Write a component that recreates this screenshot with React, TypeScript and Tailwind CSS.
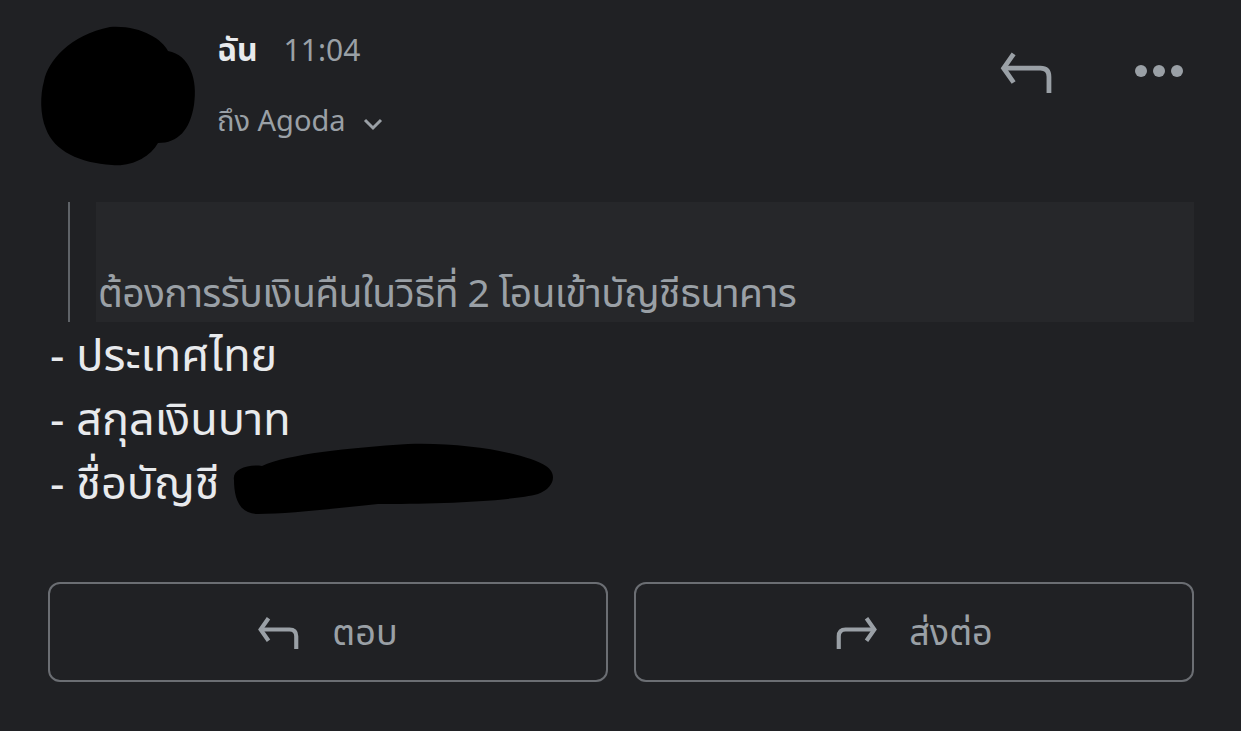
import React from "react";

function ReplyIcon({ className, sw = 5 }: { className?: string; sw?: number }) {
  return (
    <svg viewBox="0 0 56 44" className={className} fill="none" stroke="currentColor" strokeWidth={sw} strokeLinecap="butt" strokeLinejoin="miter">
      <path d="M14 3 L3.5 18 L14 33" />
      <path d="M3 18 H42 Q51 18 51 27 V44" />
    </svg>
  );
}

function ForwardIcon({ className, sw = 5 }: { className?: string; sw?: number }) {
  return (
    <svg viewBox="0 0 56 44" className={className} fill="none" stroke="currentColor" strokeWidth={sw}>
      <path d="M42 3 L52.5 18 L42 33" />
      <path d="M53 18 H14 Q5 18 5 27 V44" />
    </svg>
  );
}

export default function App() {
  const font = { fontFamily: '"Noto Sans", "Noto Sans Thai", "DejaVu Sans", sans-serif' };
  return (
    <div className="w-[1241px] h-[731px] bg-[#202124] overflow-hidden" style={font}>
      <div className="flex pl-[40px] pr-[58px] pt-[25px]">
        <svg width="160" height="142" viewBox="0 0 160 142" className="shrink-0">
          <path
            d="M70 2 C100 0 122 14 128 26 C150 30 158 55 154 80 C150 105 138 118 118 118 C110 132 92 142 72 140 C40 138 14 126 6 104 C0 90 0 70 4 56 C8 36 30 10 70 2 Z"
            fill="#000"
          />
        </svg>
        <div className="flex flex-col ml-[17px] pt-[2px]">
          <div className="flex items-baseline gap-[26px]">
            <span className="text-[32px] font-bold text-[#e8eaed] leading-[44px]">ฉัน</span>
            <span className="text-[30px] text-[#9aa0a6] leading-[44px]">11:04</span>
          </div>
          <div className="flex items-center mt-[26px]">
            <span className="text-[29px] text-[#9aa0a6] leading-[44px]">ถึง Agoda</span>
            <svg width="20" height="14" viewBox="0 0 20 14" className="ml-[17px] mt-[8px]" fill="none" stroke="#9aa0a6" strokeWidth="3">
              <path d="M2 3 L10 11 L18 3" />
            </svg>
          </div>
        </div>
        <div className="flex-1" />
        <div className="flex items-start pt-[26px] gap-[80px]">
          <ReplyIcon className="w-[56px] h-[42px] text-[#9aa0a6]" />
          <div className="flex gap-[6px] mt-[14px]">
            <span className="w-[12px] h-[12px] rounded-full bg-[#9aa0a6]" />
            <span className="w-[12px] h-[12px] rounded-full bg-[#9aa0a6]" />
            <span className="w-[12px] h-[12px] rounded-full bg-[#9aa0a6]" />
          </div>
        </div>
      </div>

      <div className="flex mt-[35px] pl-[68px] pr-[47px]">
        <div className="w-[2px] h-[120px] bg-[#5f6368]" />
        <div className="ml-[26px] flex-1 h-[120px] bg-[#26272a] flex items-end pb-[6px]">
          <span className="text-[39px] text-[#9aa0a6] leading-[48px] ml-[2px] tracking-[-0.6px]">ต้องการรับเงินคืนในวิธีที่ 2 โอนเข้าบัญชีธนาคาร</span>
        </div>
      </div>

      <div className="pl-[50px] flex flex-col text-[45px] text-[#e8eaed] leading-[64px]">
        <span>- ประเทศไทย</span>
        <span>- สกุลเงินบาท</span>
        <span className="relative">
          - ชื่อบัญชี
          <svg width="330" height="84" viewBox="0 0 330 84" className="absolute left-[178px] top-[-16px]">
            <path
              d="M6 46 C4 36 18 30 34 32 C60 20 120 14 180 10 C240 8 300 20 318 32 C330 40 326 54 310 60 C280 68 200 70 150 70 C110 74 60 80 30 80 C10 80 6 62 6 46 Z"
              fill="#000"
            />
          </svg>
        </span>
      </div>

      <div className="flex gap-[26px] pl-[48px] pr-[47px] mt-[68px]">
        <div className="flex-1 h-[100px] rounded-[12px] border-2 border-[#6b6e73] flex items-center justify-center gap-[32px] text-[#9aa0a6]">
          <ReplyIcon className="w-[42px] h-[33px]" sw={5.5} />
          <span className="text-[36px] leading-[44px]">ตอบ</span>
        </div>
        <div className="flex-1 h-[100px] rounded-[12px] border-2 border-[#6b6e73] flex items-center justify-center gap-[32px] text-[#9aa0a6]">
          <ForwardIcon className="w-[42px] h-[33px]" sw={5.5} />
          <span className="text-[36px] leading-[44px]">ส่งต่อ</span>
        </div>
      </div>
    </div>
  );
}
